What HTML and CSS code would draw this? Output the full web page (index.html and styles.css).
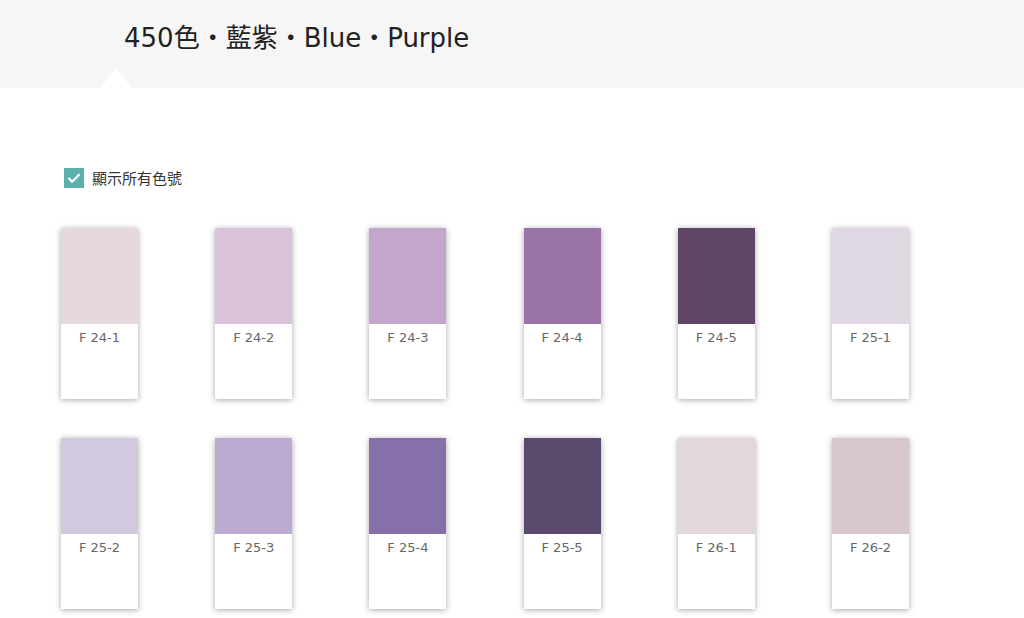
FILE: index.html
```html
<!DOCTYPE html>
<html lang="zh-Hant">
<head>
<meta charset="utf-8">
<title>450色 · 藍紫 · Blue · Purple</title>
<link rel="stylesheet" href="styles.css">
</head>
<body>
<header class="top">
  <h1 class="title">450色・藍紫・Blue・Purple</h1>
  <span class="notch"></span>
</header>
<main class="main">
  <label class="toggle">
    <span class="box"><svg viewBox="0 0 20 20" width="20" height="20"><path d="M5 10.5l3.2 3.2L15 6.8" fill="none" stroke="#fff" stroke-width="2.2" stroke-linecap="round" stroke-linejoin="round"/></svg></span>
    <span class="toggle-text">顯示所有色號</span>
  </label>
  <div class="grid">
    <div class="card"><div class="swatch" style="background:#e6d8df"></div><div class="code">F 24-1</div></div>
    <div class="card"><div class="swatch" style="background:#d8c3da"></div><div class="code">F 24-2</div></div>
    <div class="card"><div class="swatch" style="background:#c2a6cc"></div><div class="code">F 24-3</div></div>
    <div class="card"><div class="swatch" style="background:#9a74a8"></div><div class="code">F 24-4</div></div>
    <div class="card"><div class="swatch" style="background:#5f4566"></div><div class="code">F 24-5</div></div>
    <div class="card"><div class="swatch" style="background:#dfd8e2"></div><div class="code">F 25-1</div></div>
    <div class="card"><div class="swatch" style="background:#d2c9de"></div><div class="code">F 25-2</div></div>
    <div class="card"><div class="swatch" style="background:#bcabd0"></div><div class="code">F 25-3</div></div>
    <div class="card"><div class="swatch" style="background:#8670a9"></div><div class="code">F 25-4</div></div>
    <div class="card"><div class="swatch" style="background:#5a4a6d"></div><div class="code">F 25-5</div></div>
    <div class="card"><div class="swatch" style="background:#e2d7db"></div><div class="code">F 26-1</div></div>
    <div class="card"><div class="swatch" style="background:#d8c6cf"></div><div class="code">F 26-2</div></div>
  </div>
</main>
</body>
</html>
```

FILE: styles.css
```css
* { box-sizing: border-box; }
html, body { margin: 0; padding: 0; background: #fff; }
body {
  font-family: "DejaVu Sans", "Noto Sans CJK TC", sans-serif;
  color: #222;
  overflow: hidden;
}
.top {
  position: relative;
  height: 88px;
  background: #f6f6f6;
  padding: 21px 0 0 124px;
}
.title {
  margin: 0;
  font-size: 26px;
  font-weight: normal;
  line-height: 34px;
  color: #222;
  letter-spacing: 0;
}
.notch {
  position: absolute;
  left: 100px;
  bottom: 0;
  width: 0;
  height: 0;
  border-left: 16.5px solid transparent;
  border-right: 16.5px solid transparent;
  border-bottom: 20px solid #fff;
}
.main {
  padding: 79px 0 20px 61px;
}
.toggle {
  display: flex;
  align-items: center;
  gap: 8px;
  margin-left: 3px;
  height: 21px;
}
.box {
  width: 20px;
  height: 20px;
  background: #5bb0ae;
  display: flex;
}
.toggle-text {
  font-family: "Noto Sans CJK TC", sans-serif;
  font-size: 15px;
  color: #333;
}
.grid {
  margin-top: 40px;
  display: grid;
  grid-template-columns: repeat(6, 77px);
  column-gap: 77.2px;
  row-gap: 39px;
}
.card {
  width: 77px;
  height: 171px;
  background: #fff;
  box-shadow: 0 1px 6px rgba(0,0,0,0.35);
  display: flex;
  flex-direction: column;
}
.swatch {
  height: 96px;
}
.code {
  text-align: center;
  font-family: "DejaVu Sans", sans-serif;
  font-size: 13px;
  color: #666;
  padding-top: 5px;
  line-height: 18px;
}
```
